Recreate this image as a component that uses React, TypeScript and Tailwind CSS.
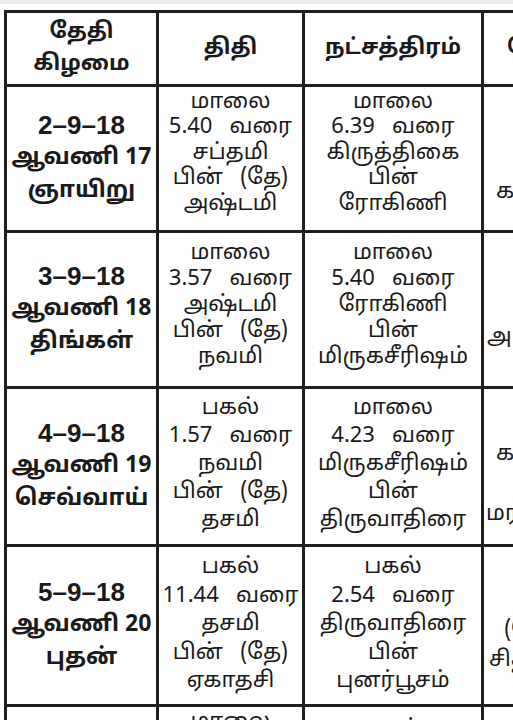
import React from "react";

const font = { fontFamily: '"Noto Sans Tamil", "Noto Sans Tamil UI", "Lohit Tamil", "Noto Sans", "DejaVu Sans", sans-serif' };
const latin = { fontFamily: '"Liberation Sans", Arial, "Noto Sans Tamil", sans-serif' };

type Line = { t: string; pl: string };
type Row = {
  date: string[];
  thithi: string[];
  star: string[];
  yoga: Line[];
  yogaPt: string;
  lh: string;
  h: string;
  shift: string;
};

const rows: Row[] = [
  {
    date: ["2–9–18", "ஆவணி 17", "ஞாயிறு"],
    thithi: ["மாலை", "5.40   வரை", "சப்தமி", "பின்   (தே)", "அஷ்டமி"],
    star: ["மாலை", "6.39   வரை", "கிருத்திகை", "பின்", "ரோகிணி"],
    yoga: [{ t: "கரம்", pl: "pl-[12px]" }],
    yogaPt: "pt-[91px]",
    lh: "leading-[25.5px]",
    h: "h-[146px]",
    shift: "pb-[10px]",
  },
  {
    date: ["3–9–18", "ஆவணி 18", "திங்கள்"],
    thithi: ["மாலை", "3.57   வரை", "அஷ்டமி", "பின்   (தே)", "நவமி"],
    star: ["மாலை", "5.40   வரை", "ரோகிணி", "பின்", "மிருகசீரிஷம்"],
    yoga: [{ t: "அமிர்த", pl: "pl-[3px]" }],
    yogaPt: "pt-[90px]",
    lh: "leading-[26px]",
    h: "h-[156px]",
    shift: "pb-[8px]",
  },
  {
    date: ["4–9–18", "ஆவணி 19", "செவ்வாய்"],
    thithi: ["பகல்", "1.57   வரை", "நவமி", "பின்   (தே)", "தசமி"],
    star: ["மாலை", "4.23   வரை", "மிருகசீரிஷம்", "பின்", "திருவாதிரை"],
    yoga: [
      { t: "கரம்", pl: "pl-[12px]" },
      { t: " ", pl: "pl-[2px]" },
      { t: "மரண", pl: "pl-[2px]" },
    ],
    yogaPt: "pt-[51px]",
    lh: "leading-[28px]",
    h: "h-[158px]",
    shift: "pb-[4px]",
  },
  {
    date: ["5–9–18", "ஆவணி 20", "புதன்"],
    thithi: ["பகல்", "11.44   வரை", "தசமி", "பின்   (தே)", "ஏகாதசி"],
    star: ["பகல்", "2.54   வரை", "திருவாதிரை", "பின்", "புனர்பூசம்"],
    yoga: [
      { t: "(தே)", pl: "pl-[20px]" },
      { t: "சித்த", pl: "pl-[5px]" },
    ],
    yogaPt: "pt-[69px]",
    lh: "leading-[28.5px]",
    h: "h-[160px]",
    shift: "pb-0",
  },
];

const cell = "border-[3px] border-[#1f1f1f] text-center align-middle p-0";

function Lines({ items, lh }: { items: string[]; lh: string }) {
  return (
    <div className={`text-[22px] whitespace-pre ${lh}`}>
      {items.map((t, j) => (
        <div key={j}>{t}</div>
      ))}
    </div>
  );
}

export default function App() {
  return (
    <div className="w-[513px] h-[720px] overflow-hidden bg-white relative" style={font}>
      <div className="h-[4px] bg-[#ececec]" />
      <div className="flex">
        <div className="w-[3px] h-[720px] bg-[#d6ead6]" />
        <div className="pl-[4px] pt-[6px]">
          <table className="table-fixed border-collapse w-[702px] text-[#1a1a1a]">
            <colgroup>
              <col className="w-[152px]" />
              <col className="w-[146px]" />
              <col className="w-[179px]" />
              <col className="w-[225px]" />
            </colgroup>
            <thead>
              <tr className="h-[74px]">
                <th className={cell}>
                  <div className="font-bold text-[22px] leading-[32px]">
                    <div>தேதி</div>
                    <div>கிழமை</div>
                  </div>
                </th>
                <th className={cell}>
                  <div className="font-bold text-[22px] leading-[32px]">திதி</div>
                </th>
                <th className={cell}>
                  <div className="font-bold text-[22px] leading-[32px]">நட்சத்திரம்</div>
                </th>
                <th className={`${cell} text-left`}>
                  <div className="font-bold text-[22px] leading-[32px] pl-[23px]">யோகம்</div>
                </th>
              </tr>
            </thead>
            <tbody>
              {rows.map((r, i) => (
                <tr key={i} className={r.h}>
                  <td className={cell}>
                    <div className="font-bold leading-[33px]">
                      <div className="text-[26px]" style={latin}>{r.date[0]}</div>
                      <div className="text-[23px]">{r.date[1]}</div>
                      <div className="text-[23px]">{r.date[2]}</div>
                    </div>
                  </td>
                  <td className={cell}>
                    <div className={r.shift}>
                      <Lines items={r.thithi} lh={r.lh} />
                    </div>
                  </td>
                  <td className={cell}>
                    <div className={r.shift}>
                      <Lines items={r.star} lh={r.lh} />
                    </div>
                  </td>
                  <td className={`${cell} text-left align-top`}>
                    <div className={`text-[22px] whitespace-pre leading-[30px] ${r.yogaPt}`}>
                      {r.yoga.map((t, j) => (
                        <div key={j} className={t.pl}>{t.t}</div>
                      ))}
                    </div>
                  </td>
                </tr>
              ))}
              <tr className="h-[160px]">
                <td className={cell}>
                  <div className="font-bold leading-[33px]">
                    <div className="text-[26px]" style={latin}>6–9–18</div>
                    <div className="text-[23px]">ஆவணி 21</div>
                    <div className="text-[23px]">வியாழன்</div>
                  </div>
                </td>
                <td className={`${cell} align-top`}>
                  <div className="pt-[2px]">
                    <Lines items={["மாலை", "1.00   வரை", "ஏகாதசி", "பின்   (தே)", "துவாதசி"]} lh="leading-[28px]" />
                  </div>
                </td>
                <td className={`${cell} align-top`}>
                  <div className="pt-[9px]">
                    <Lines items={["பகல்", "1.10   வரை", "புனர்பூசம்", "பின்", "பூசம்"]} lh="leading-[28px]" />
                  </div>
                </td>
                <td className={`${cell} text-left align-top`}>
                  <div className="text-[22px] leading-[30px] pl-[8px] pt-[60px]">சித்த</div>
                </td>
              </tr>
            </tbody>
          </table>
        </div>
      </div>
    </div>
  );
}
